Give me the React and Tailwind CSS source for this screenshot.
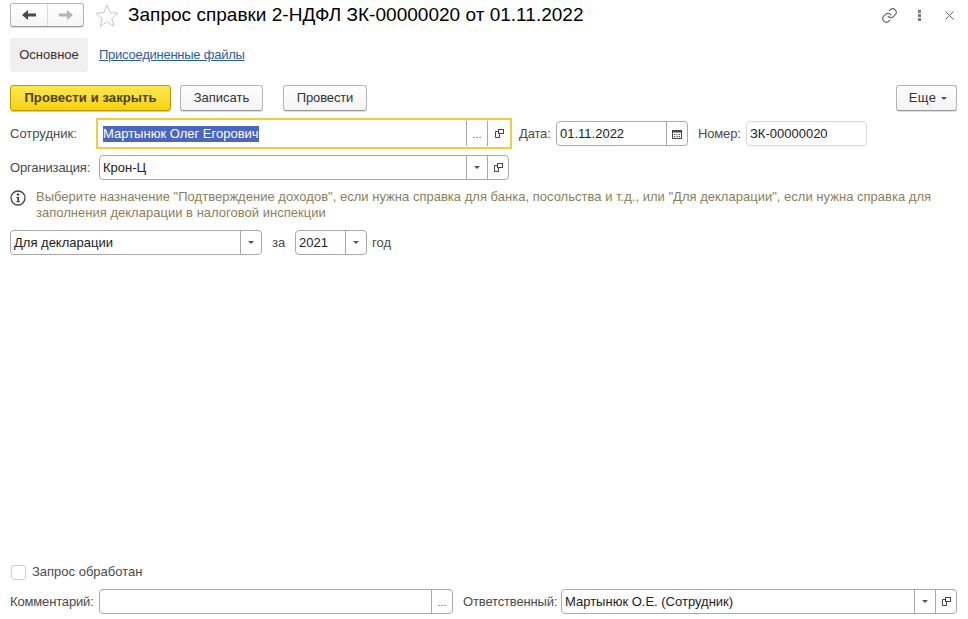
import React from "react";

const Caret = () => (
  <svg width="6" height="3" viewBox="0 0 6 3"><path d="M0 0h6L3 3z" fill="#555" /></svg>
);
const OpenIcon = () => (
  <svg width="9" height="9" viewBox="0 0 9 9" fill="none" stroke="#444" strokeWidth="1">
    <rect x="3.500" y="0.500" width="5" height="4" fill="#fff" />
    <path d="M3.500 2.500H0.500V8.500H4.500V4.500" />
  </svg>
);
const Seg = ({ w = "w-[21px]", children }) => (
  <div className={`${w} h-full border-l border-[#a8a8a8] flex items-center justify-center shrink-0`}>{children}</div>
);
const Dots = () => <span className="text-[11px] leading-none text-[#555] relative top-[1px]">...</span>;
const Field = ({ className = "", children, text }) => (
  <div className={`h-[25px] border border-[#a8a8a8] rounded-[4px] bg-white flex items-center ${className}`}>
    <div className="flex-1 min-w-0 pl-[3px] text-[#222] whitespace-nowrap">{text}</div>
    {children}
  </div>
);
const Btn = ({ className = "", children }) => (
  <button className={`h-[26px] border border-[#b5b5b5] border-b-[#9a9a9a] rounded-[3px] bg-gradient-to-b from-white to-[#f3f3f3] text-[#333] shadow-[0_1px_0_#ddd] flex items-center justify-center ${className}`}>{children}</button>
);

export default function App() {
  return (
    <div className="w-[968px] h-[619px] bg-white flex flex-col px-[10px] text-[13px] leading-[16px] text-[#4a4a4a] overflow-hidden" style={{ fontFamily: '"Liberation Sans", Arial, sans-serif' }}>
      <div className="flex items-center h-[24px] mt-[3px] shrink-0">
        <div className="w-[74px] h-[24px] border border-[#b5b5b5] border-b-[#999] rounded-[3px] flex bg-gradient-to-b from-white to-[#f5f5f5] shadow-[0_1px_0_#ddd]">
          <div className="w-[37px] flex items-center justify-center border-r border-[#dcdcdc]">
            <svg width="14" height="10" viewBox="0 0 14 10"><path d="M0 5l6-5v3.500h8v3H6V10z" fill="#4a4a4a" /></svg>
          </div>
          <div className="flex-1 flex items-center justify-center">
            <svg width="14" height="10" viewBox="0 0 14 10"><path d="M14 5L8 0v3.500H0v3h8V10z" fill="#b4b4b4" /></svg>
          </div>
        </div>
        <svg className="ml-[11px]" width="24" height="23" viewBox="0 0 24 23" fill="none" stroke="#c8c8c8"><path d="M12 1l3 7.600 8 .6-6.200 5.100 2 7.900L12 18l-6.800 4.200 2-7.900L1 9.200l8-.6z" /></svg>
        <div className="ml-[9px] text-[19px] leading-[24px] text-black whitespace-nowrap tracking-[0.02px]">Запрос справки 2-НДФЛ ЗК-00000020 от 01.11.2022</div>
        <div className="ml-auto flex items-center">
          <svg width="17" height="17" viewBox="0 0 24 24" fill="none" stroke="#666" strokeWidth="1.600" strokeLinecap="round"><path d="M10 13a5 5 0 0 0 7.500.5l3-3a5 5 0 0 0-7-7l-1.700 1.700" /><path d="M14 11a5 5 0 0 0-7.500-.5l-3 3a5 5 0 0 0 7 7l1.700-1.700" /></svg>
          <div className="ml-[20px] flex flex-col gap-[1px]">
            <span className="w-[3px] h-[3px] bg-[#808080]" />
            <span className="w-[3px] h-[3px] bg-[#808080]" />
            <span className="w-[3px] h-[3px] bg-[#808080]" />
          </div>
          <svg className="ml-[24px] mr-[4px]" width="9" height="9" viewBox="0 0 9 9" stroke="#666"><path d="M.5.500l8 8M8.500.500l-8 8" /></svg>
        </div>
      </div>

      <div className="flex items-center h-[34px] mt-[11px] shrink-0">
        <div className="w-[78px] h-[34px] bg-[#f0f0f0] rounded-[3px] flex items-center justify-center text-[#333]">Основное</div>
        <a className="ml-[11px] text-[#2a5ea8] underline tracking-[-0.25px]">Присоединенные файлы</a>
      </div>

      <div className="flex items-center mt-[13px] shrink-0">
        <button className="w-[161px] h-[26px] border border-[#b89b00] rounded-[3px] bg-gradient-to-b from-[#ffe94d] to-[#f7d000] font-bold text-[#4a4200] shadow-[0_1px_0_#ccc] tracking-[0.1px]">Провести и закрыть</button>
        <Btn className="w-[83px] ml-[9px]">Записать</Btn>
        <Btn className="w-[84px] ml-[20px] tracking-[-0.15px]">Провести</Btn>
        <Btn className="w-[61px] ml-auto mr-[1px] gap-[5px] pl-[3px] tracking-[0.4px]">Еще <Caret /></Btn>
      </div>

      <div className="flex items-center mt-[7px] h-[31px] shrink-0">
        <div className="w-[86px]">Сотрудник:</div>
        <div className="w-[416px] h-[31px] border-2 border-[#f0cd3c] flex items-center bg-white">
          <div className="flex-1 pl-[5px]"><span className="inline-block bg-[#4a66bd] text-white leading-[16px]">Мартынюк Олег Егорович</span></div>
          <div className="h-[25px] flex">
            <Seg><Dots /></Seg>
            <Seg w="w-[23px]"><OpenIcon /></Seg>
          </div>
        </div>
        <div className="ml-[7px] w-[37px] tracking-[-0.15px]">Дата:</div>
        <Field className="w-[132px]" text="01.11.2022">
          <Seg><svg width="10" height="10" viewBox="0 0 10 10"><rect x=".5" y="1.500" width="9" height="8" fill="none" stroke="#444" /><rect x="1" y="1" width="8" height="2.500" fill="#444" /><path d="M2 5h1.200v1H2zM4.400 5h1.200v1H4.400zM6.800 5H8v1H6.800zM2 7h1.200v1H2zM4.400 7h1.200v1H4.400zM6.800 7H8v1H6.800z" fill="#444" /></svg></Seg>
        </Field>
        <div className="ml-[10px] w-[48px] tracking-[-0.15px]">Номер:</div>
        <Field className="w-[121px] border-[#d9d9d9]" text="ЗК-00000020" />
      </div>

      <div className="flex items-center mt-[6px] shrink-0">
        <div className="w-[89px] tracking-[-0.15px]">Организация:</div>
        <Field className="w-[410px]" text="Крон-Ц">
          <Seg><Caret /></Seg>
          <Seg><OpenIcon /></Seg>
        </Field>
      </div>

      <div className="flex mt-[9px] shrink-0">
        <svg className="mt-[1px] shrink-0" width="16" height="16" viewBox="0 0 16 16"><circle cx="8" cy="8" r="7" fill="none" stroke="#444" strokeWidth="1.300" /><circle cx="8" cy="4.500" r="1.300" fill="#444" /><path d="M6.300 7h2.800v4.200h1V12.300H6.300v-1.100h1V8H6.300z" fill="#444" /></svg>
        <div className="ml-[10px] text-[#8a7f5c] tracking-[0.015px]">Выберите назначение "Подтверждение доходов", если нужна справка для банка, посольства и т.д., или "Для декларации", если нужна справка для<br />заполнения декларации в налоговой инспекции</div>
      </div>

      <div className="flex items-center mt-[9px] shrink-0">
        <Field className="w-[252px]" text="Для декларации"><Seg><Caret /></Seg></Field>
        <div className="ml-[10px] w-[23px]">за</div>
        <Field className="w-[72px]" text="2021"><Seg><Caret /></Seg></Field>
        <div className="ml-[5px]">год</div>
      </div>

      <div className="flex items-center mt-auto shrink-0">
        <div className="w-[15px] h-[15px] ml-[1px] border border-[#cfcfcf] rounded-[3px]" />
        <div className="ml-[6px]">Запрос обработан</div>
      </div>

      <div className="flex items-center mt-[9px] mb-[5px] shrink-0">
        <div className="w-[89px] tracking-[-0.15px]">Комментарий:</div>
        <Field className="w-[354px]" text=""><Seg><Dots /></Seg></Field>
        <div className="ml-[10px] w-[98px] tracking-[-0.15px]">Ответственный:</div>
        <Field className="w-[396px]" text="Мартынюк О.Е. (Сотрудник)">
          <Seg><Caret /></Seg>
          <Seg><OpenIcon /></Seg>
        </Field>
      </div>
    </div>
  );
}
